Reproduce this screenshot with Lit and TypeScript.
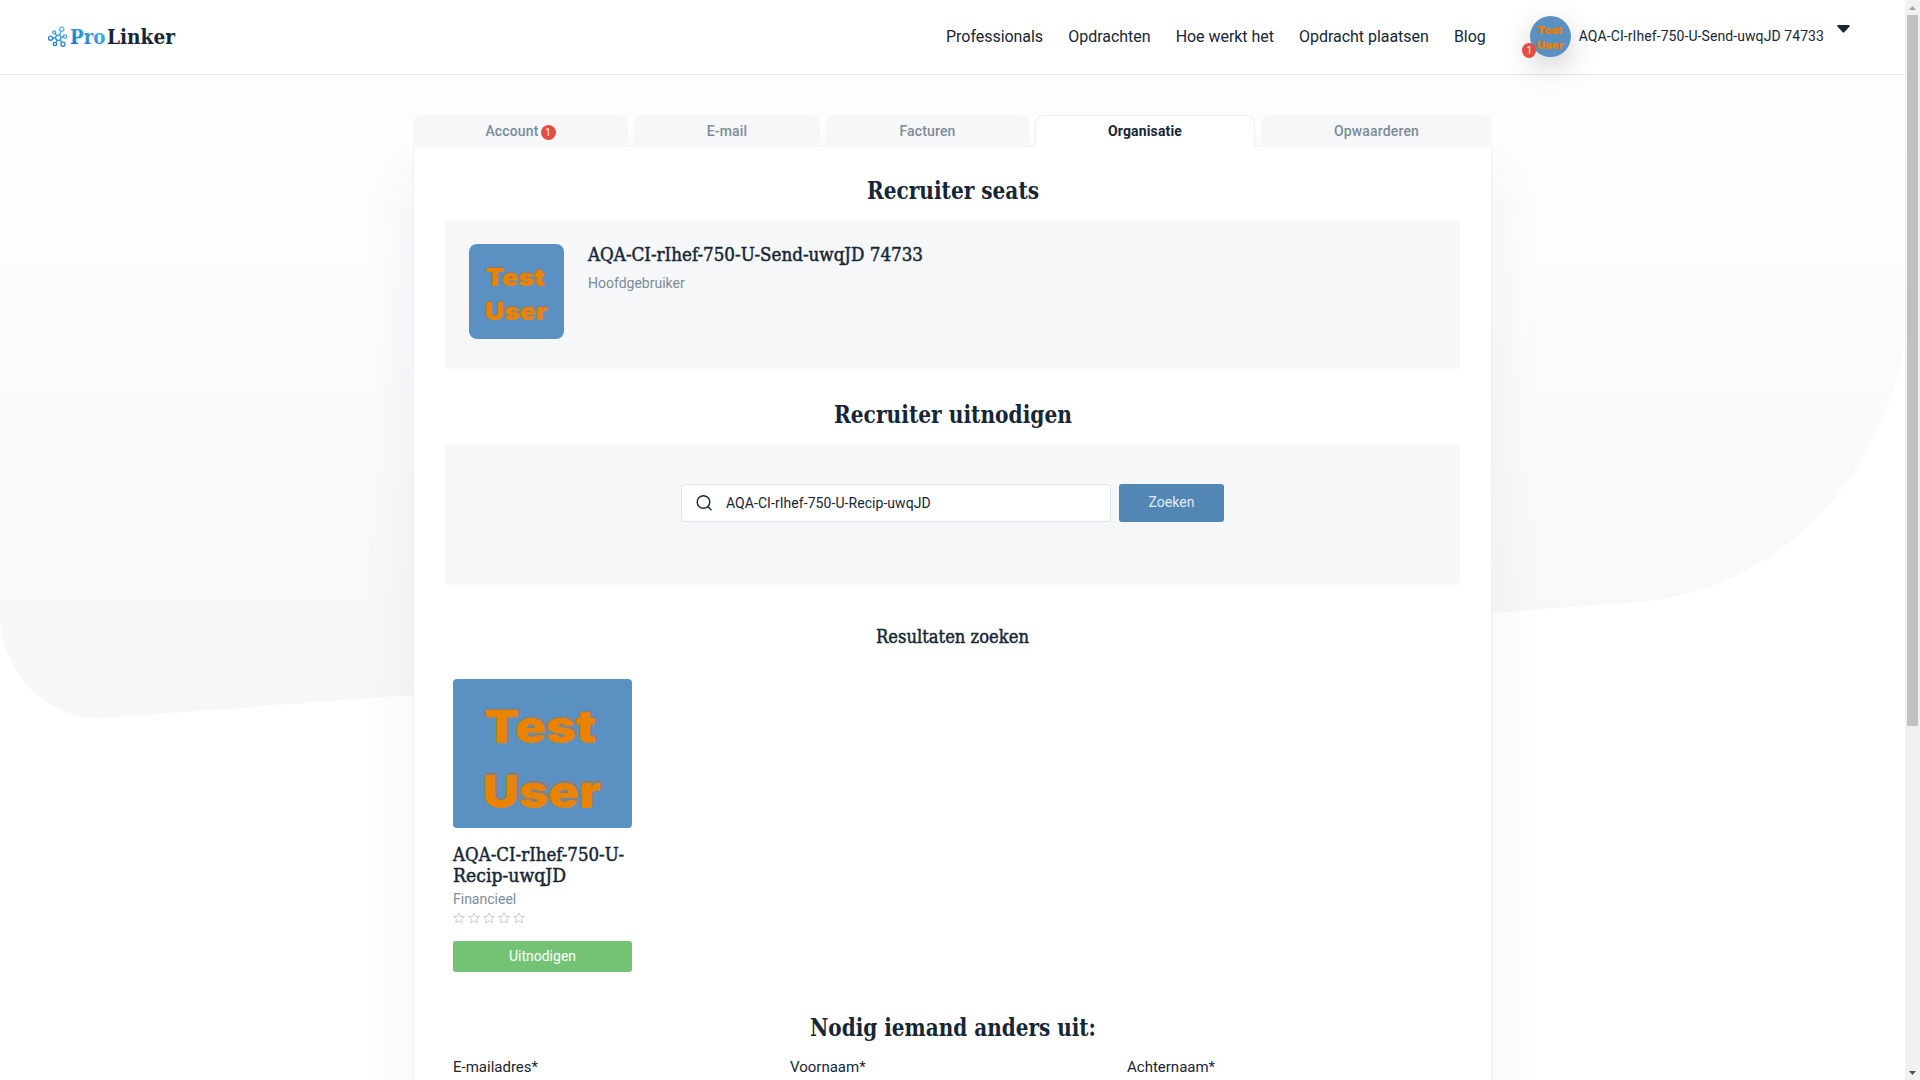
import { LitElement, html, css, svg } from "lit";
import { customElement, property } from "lit/decorators.js";

@customElement("user-picture")
class UserPicture extends LitElement {
  static styles = css`
    :host { display: block; overflow: hidden; background: #5a91c2; }
    .pic { display: block; width: 100%; height: 100%; }
    .word { font: 900 45px Inter, "Liberation Sans", sans-serif; }
    .front { fill: #e98300; }
    .back { fill: #8a7f72; stroke: #8a7f72; stroke-width: 0.8; opacity: 0.85; }
  `;
  render() {
    const words = (cls: string, dx: number, dy: number) => svg`
      <g class=${"word " + cls} transform=${`translate(${dx} ${dy})`}>
        <text x="31" y="79" textLength="112" lengthAdjust="spacingAndGlyphs">Test</text>
        <text x="29.5" y="143.5" textLength="118" lengthAdjust="spacingAndGlyphs">User</text>
      </g>`;
    return html`<svg class="pic" viewBox="0 0 179 179" preserveAspectRatio="xMidYMid slice">
      ${words("back", 2.2, -1.5)}${words("front", 0, 0)}
    </svg>`;
  }
}

@customElement("app-root")
class AppRoot extends LitElement {
  @property() query = "AQA-CI-rIhef-750-U-Recip-uwqJD";

  static styles = css`
    :host {
      display: block;
      font-family: Roboto, sans-serif;
      color: #172635;
      --slab: "Roboto Slab", "DejaVu Serif Condensed", "DejaVu Serif", serif;
    }
    * { box-sizing: border-box; }
    .window { display: grid; grid-template-columns: 1fr 15px; height: 1080px; overflow: hidden; background: #fff; }
    .page { position: relative; height: 1080px; overflow: hidden; }
    .backdrop { position: absolute; left: 0; top: 0; }
    .header {
      position: relative; height: 75px; background: #fff; border-bottom: 1px solid #e1e7ea;
      display: flex; align-items: center; padding: 0 55px 1px 48px;
    }
    .logo { display: flex; align-items: center; gap: 3px; padding-top: 1px; }
    .mark { display: block; }
    .wordmark { display: block; overflow: visible; }
    .brand { font: 700 21px var(--slab); }
    .nav { display: flex; gap: 25.2px; margin-left: auto; font-size: 16px; line-height: 24px; letter-spacing: -.04px; padding-top: 1px; }
    .user { display: flex; align-items: center; margin-left: 44px; }
    .face { position: relative; width: 41px; height: 41px; }
    .face user-picture { width: 41px; height: 41px; border-radius: 50%; box-shadow: 0 10px 30px rgba(0,0,0,.2); }
    .badge {
      display: inline-flex; align-items: center; justify-content: center; width: 15px; height: 15px;
      border-radius: 50%; background: #e74c43; color: #fff; font-size: 10px; line-height: 15px; font-weight: 400;
      letter-spacing: 0;
    }
    .face .badge { position: absolute; left: -7.5px; top: 27px; width: 14px; }
    .name { margin-left: 8px; font-size: 14px; white-space: nowrap; letter-spacing: .08px; padding-bottom: 1px; }
    .caret { margin: -15px 0 0 13px; display: block; }
    .main { position: relative; width: 1079px; margin: 40px auto 0; }
    .tabs { position: relative; z-index: 1; display: grid; grid-template-columns: 215px 186px 203px 220px 231px; justify-content: space-between; }
    .tab {
      height: 32px; display: flex; align-items: center; justify-content: center; gap: 2px;
      background: #f5f7f9; color: #7c8b99; border-radius: 8px 8px 0 0;
      font-size: 14px; font-weight: 500; letter-spacing: .15px;
    }
    .tab .badge { margin-top: 2px; }
    .tab.active { background: #fff; color: #172635; font-weight: 700; border: 1px solid #eeeefc; border-bottom: 0; padding-bottom: 1px; }
    .card {
      height: 1000px; margin-top: -1px; border: 1px solid #eeeefc; background: #fff; padding: 23px 31px;
      box-shadow: 0 30px 56px rgba(20,30,40,.055);
    }
    .title { margin: 0; height: 40px; display: flex; align-items: center; justify-content: center; }
    .fit { display: block; overflow: visible; fill: #172635; }
    .h1 { font: 700 24px var(--slab); }
    .h2 { font: 500 18px var(--slab); stroke: #172635; stroke-width: .45; }
    .seat { margin-top: 10px; height: 149px; background: #f5f7f9; border-radius: 4px; padding: 24px; display: flex; gap: 24px; }
    .seat user-picture { width: 95px; height: 95px; border-radius: 8px; }
    .muted { color: #7c8b99; font-size: 14px; line-height: 20px; }
    .seat .muted { padding-top: 1px; }
    .invite { margin-top: 25px; }
    .search { margin-top: 10px; height: 141px; background: #f5f7f9; border-radius: 4px; padding-top: 40px; display: flex; justify-content: center; gap: 8px; }
    .field { width: 430px; height: 38px; background: #fff; border: 1px solid #e1e6ea; border-radius: 4px; display: flex; align-items: center; padding-left: 13px; gap: 13px; font-size: 14px; letter-spacing: .06px; }
    .go { width: 105px; height: 38px; border-radius: 3px; background: #5286b4; color: #e3ecf3; font-size: 14px; display: flex; align-items: center; justify-content: center; padding-bottom: 2px; }
    .results { margin-top: 32px; }
    .result { margin: 22px 0 0 8px; width: 179px; }
    .result user-picture { width: 179px; height: 149px; border-radius: 4px; }
    .who { display: block; margin-top: 16px; }
    .result .muted { margin-top: 3px; }
    .stars { display: flex; gap: 3px; margin-top: 3px; height: 12px; }
    .uit { margin-top: 17px; height: 31px; border-radius: 3px; background: #74c374; color: #fff; font-size: 14px; display: flex; align-items: center; justify-content: center; padding-bottom: 1px; }
    .other { margin-top: 35px; }
    .labels { margin: 9px 0 0 8px; display: grid; grid-template-columns: 337px 337px 337px; font-size: 15px; line-height: 22px; }
    .scroll { background: #f1f1f1; display: flex; flex-direction: column; align-items: center; }
    .arrow { display: block; height: 15px; }
    .thumb { width: 11px; height: 711px; background: #c1c1c1; }
    .scroll .arrow.down { margin-top: auto; }
  `;

  /** Slab text drawn at a known width so headings keep their measure with any installed slab face. */
  private slab(text: string, cls: string, width: number, height: number, baseline: number) {
    return html`<svg class="fit" width=${width} height=${height}>
      <text class=${cls} x="0" y=${baseline} textLength=${width} lengthAdjust="spacingAndGlyphs">${text}</text>
    </svg>`;
  }

  private title(text: string, width: number, cls = "h1") {
    return this.slab(text, cls, width, 32, cls === "h1" ? 24.5 : 22);
  }

  render() {
    const star = html`<svg width="12" height="12" viewBox="0 0 12 12" fill="none" stroke="#c6cdd3" stroke-width="1">
      <path d="M6 .9 7.5 4.3 11.3 4.6 8.4 7.1 9.4 10.9 6 8.9 2.6 10.9 3.6 7.1 .7 4.6 4.5 4.3Z" /></svg>`;
    return html`
      <div class="window">
        <div class="page">
          <svg class="backdrop" width="1905" height="730">
            <defs><linearGradient id="fade" x1="0" y1="0" x2="0" y2="1">
              <stop offset="0" stop-color="#fdfffe" /><stop offset=".5" stop-color="#fafbfd" /><stop offset="1" stop-color="#f5f7f9" />
            </linearGradient></defs>
            <path fill="url(#fade)" d="M0 0H1905V340C1884 475 1785 583 1650 601L106 718C46 722 0 670 0 615Z" />
          </svg>
          <header class="header">
            <div class="logo">
              <svg class="mark" width="20" height="22" viewBox="0 0 20 22" fill="none" stroke="url(#blue)" stroke-width="1.3">
                <defs><linearGradient id="blue" gradientUnits="userSpaceOnUse" x1="14" y1="1" x2="5" y2="20">
                  <stop offset="0" stop-color="#55b9f2" /><stop offset="1" stop-color="#1272c4" /></linearGradient></defs>
                <circle cx="10.3" cy="11.8" r="2.6" /><circle cx="13.8" cy="3.3" r="2.1" /><circle cx="6.3" cy="6.3" r="1.5" />
                <circle cx="2.6" cy="12.2" r="2.1" /><circle cx="17" cy="10.5" r="1.7" /><circle cx="7" cy="18" r="1.7" /><circle cx="15" cy="18.3" r="2.1" />
                <path d="M11.3 9.4 13 5.3M8.8 9.7 7.2 7.5M7.7 12H4.8M12.9 11.4 15.3 10.9M9.3 14.2 7.8 16.5M11.9 13.9 13.7 16.6" />
              </svg>
              <svg class="wordmark" width="104" height="28">
                <defs><linearGradient id="pro" x1="0" y1="1" x2=".7" y2="0">
                  <stop offset="0" stop-color="#0f66bd" /><stop offset="1" stop-color="#52b8f3" /></linearGradient></defs>
                <text class="brand" x="-1" y="20.7" textLength="35.5" lengthAdjust="spacingAndGlyphs" fill="url(#pro)">Pro</text>
                <text class="brand" x="36" y="20.7" textLength="68" lengthAdjust="spacingAndGlyphs" fill="#172635">Linker</text>
              </svg>
            </div>
            <nav class="nav">
              <span>Professionals</span><span>Opdrachten</span><span>Hoe werkt het</span><span>Opdracht plaatsen</span><span>Blog</span>
            </nav>
            <div class="user">
              <div class="face"><user-picture></user-picture><span class="badge">1</span></div>
              <span class="name">AQA-CI-rIhef-750-U-Send-uwqJD 74733</span>
              <svg class="caret" width="13" height="8" viewBox="0 0 13 8"><path fill="#172635" d="M1 0H12Q13 .2 12.6 1.4L7.3 7.2Q6.5 8 5.7 7.2L.4 1.4Q0 .2 1 0Z" /></svg>
            </div>
          </header>
          <main class="main">
            <div class="tabs">
              <div class="tab">Account <span class="badge">1</span></div>
              <div class="tab">E-mail</div>
              <div class="tab">Facturen</div>
              <div class="tab active">Organisatie</div>
              <div class="tab">Opwaarderen</div>
            </div>
            <section class="card">
              <h2 class="title">${this.title("Recruiter seats", 172)}</h2>
              <div class="seat">
                <user-picture></user-picture>
                <div>
                  ${this.slab("AQA-CI-rIhef-750-U-Send-uwqJD 74733", "h2", 335, 28, 17)}
                  <div class="muted">Hoofdgebruiker</div>
                </div>
              </div>
              <h2 class="title invite">${this.title("Recruiter uitnodigen", 238)}</h2>
              <div class="search">
                <div class="field">
                  <svg width="18" height="18" viewBox="0 0 18 18" fill="none" stroke="#172635" stroke-width="1.4" stroke-linecap="round">
                    <circle cx="8.5" cy="8" r="6.3" /><path d="M13 12.7 16 15.7" /></svg>
                  <span>${this.query}</span>
                </div>
                <div class="go">Zoeken</div>
              </div>
              <h3 class="title results">${this.title("Resultaten zoeken", 153, "h2")}</h3>
              <div class="result">
                <user-picture></user-picture>
                <div class="who">
                  ${this.slab("AQA-CI-rIhef-750-U-", "h2", 171, 21, 16.5)}
                  ${this.slab("Recip-uwqJD", "h2", 113, 21, 16.5)}
                </div>
                <div class="muted">Financieel</div>
                <div class="stars">${[1, 2, 3, 4, 5].map(() => star)}</div>
                <div class="uit">Uitnodigen</div>
              </div>
              <h2 class="title other">${this.title("Nodig iemand anders uit:", 286)}</h2>
              <div class="labels"><span>E-mailadres*</span><span>Voornaam*</span><span>Achternaam*</span></div>
            </section>
          </main>
        </div>
        <div class="scroll">
          <svg class="arrow" width="15" height="15"><path fill="#a3a3a3" d="M4 10 7.5 6 11 10Z" /></svg>
          <div class="thumb"></div>
          <svg class="arrow down" width="15" height="15"><path fill="#505050" d="M4 6 7.5 10 11 6Z" /></svg>
        </div>
      </div>`;
  }
}
